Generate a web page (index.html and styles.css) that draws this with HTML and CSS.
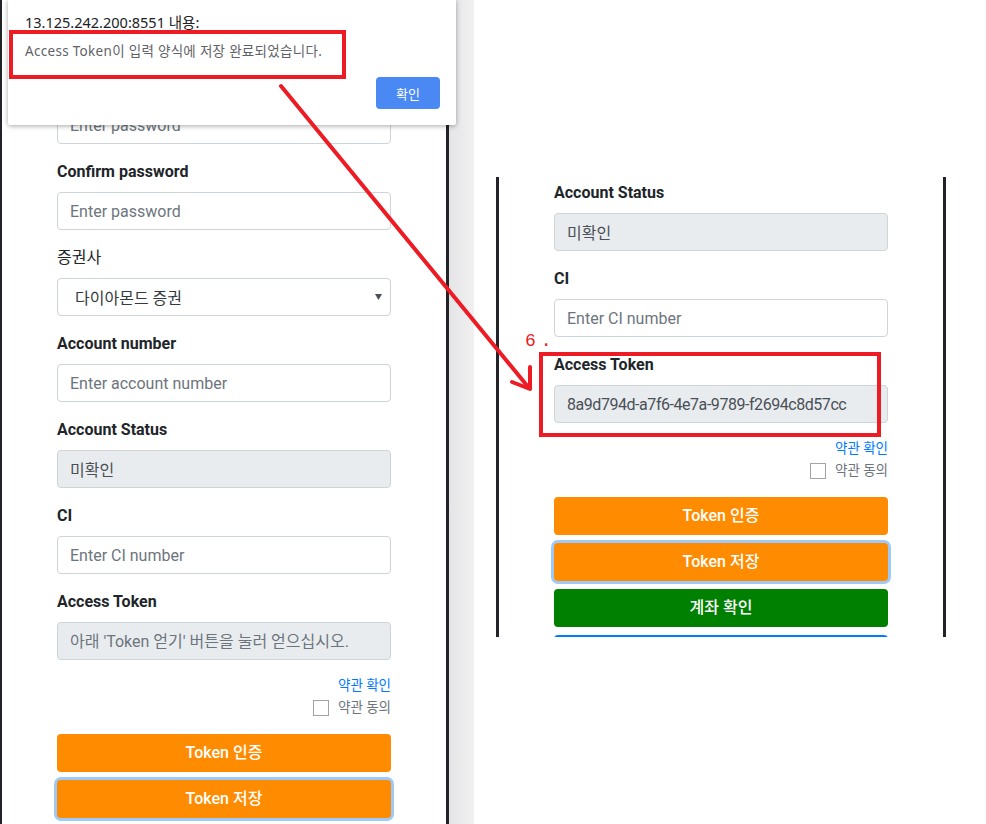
FILE: index.html
```html
<!DOCTYPE html>
<html lang="ko">
<head>
<meta charset="utf-8">
<title>Access Token</title>
<link rel="stylesheet" href="styles.css">
</head>
<body>
<div class="page">
  <section class="panel panel-left">
    <div class="group">
      <label class="label">Password</label>
      <input class="control" type="password" placeholder="Enter password">
    </div>
    <div class="group">
      <label class="label">Confirm password</label>
      <input class="control" type="password" placeholder="Enter password">
    </div>
    <div class="group">
      <label class="label label-plain">증권사</label>
      <div class="select"><span>다이아몬드 증권</span><svg class="caret" width="7" height="6" viewBox="0 0 7 6"><path d="M0 0H7L3.5 6Z" fill="#495057"/></svg></div>
    </div>
    <div class="group">
      <label class="label">Account number</label>
      <input class="control" type="text" placeholder="Enter account number">
    </div>
    <div class="group">
      <label class="label">Account Status</label>
      <input class="control" type="text" value="미확인" disabled>
    </div>
    <div class="group">
      <label class="label">CI</label>
      <input class="control" type="text" placeholder="Enter CI number">
    </div>
    <div class="group">
      <label class="label">Access Token</label>
      <input class="control" type="text" placeholder="아래 'Token 얻기' 버튼을 눌러 얻으십시오." disabled>
    </div>
    <div class="terms">
      <a href="#">약관 확인</a>
      <div class="agree"><input class="check" type="checkbox"><span>약관 동의</span></div>
    </div>
    <button class="btn btn-orange">Token 인증</button>
    <button class="btn btn-orange btn-focus">Token 저장</button>
  </section>

  <div class="gutter"></div>

  <section class="panel panel-right">
    <div class="group">
      <label class="label">Account Status</label>
      <input class="control" type="text" value="미확인" disabled>
    </div>
    <div class="group">
      <label class="label">CI</label>
      <input class="control" type="text" placeholder="Enter CI number">
    </div>
    <div class="group">
      <label class="label">Access Token</label>
      <input class="control control-token" type="text" value="8a9d794d-a7f6-4e7a-9789-f2694c8d57cc" disabled>
    </div>
    <div class="terms">
      <a href="#">약관 확인</a>
      <div class="agree"><input class="check" type="checkbox"><span>약관 동의</span></div>
    </div>
    <button class="btn btn-orange">Token 인증</button>
    <button class="btn btn-orange btn-focus">Token 저장</button>
    <button class="btn btn-green">계좌 확인</button>
    <button class="btn btn-blue" aria-label="다음"></button>
  </section>
</div>

<div class="dialog">
  <div class="dialog-title">13.125.242.200:8551 내용:</div>
  <div class="dialog-msg">Access Token이 입력 양식에 저장 완료되었습니다.</div>
  <button class="dialog-btn">확인</button>
  <div class="mark mark-dialog"></div>
</div>

<div class="mark mark-token"></div>
<div class="step">6.</div>

<svg class="arrow" width="986" height="824" viewBox="0 0 986 824">
  <g fill="none" stroke="#ed1c24" stroke-width="4" stroke-linecap="round" stroke-linejoin="round">
    <path d="M281 86 L529 388"/>
    <path d="M512 382 L530 389 L530 367"/>
  </g>
</svg>
</body>
</html>
```

FILE: styles.css
```css
* { box-sizing: border-box; }

html, body { margin: 0; padding: 0; }

body {
  width: 986px;
  height: 824px;
  overflow: hidden;
  position: relative;
  background: #fff;
  font-family: Roboto, "Noto Sans CJK KR", sans-serif;
  color: #212529;
}

.page {
  display: flex;
  align-items: flex-start;
  height: 824px;
}

.panel {
  background: #fff;
  overflow: hidden;
  flex: none;
}

.panel-left {
  width: 449px;
  height: 824px;
  border-left: 2px solid #212327;
  border-right: 3px solid #212327;
  padding: 74px 55px 0;
}

.gutter {
  flex: none;
  width: 25px;
  height: 824px;
  background: linear-gradient(to right, #e5e5e7, #f0f0f1);
}

.panel-right {
  margin-left: 22px;
  margin-top: 177px;
  width: 450px;
  height: 460px;
  border-left: 3px solid #212327;
  border-right: 3px solid #212327;
  padding: 4px 55px 0;
}

.group { margin-bottom: 16px; }

.label {
  display: block;
  font-size: 16px;
  line-height: 24px;
  font-weight: 700;
  color: #212529;
  margin-bottom: 8px;
}

.label-plain { font-weight: 400; }

.control {
  display: block;
  width: 100%;
  height: 38px;
  margin: 0;
  padding: 6px 12px;
  font-family: inherit;
  font-size: 16px;
  line-height: 24px;
  color: #495057;
  background: #fff;
  border: 1px solid #ced4da;
  border-radius: 4px;
  outline: none;
}

.control::placeholder { color: #6c757d; opacity: 1; }

.control:disabled {
  background: #e9ecef;
  color: #495057;
  -webkit-text-fill-color: #495057;
  opacity: 1;
}

.control:disabled::placeholder {
  color: #6c757d;
  -webkit-text-fill-color: #6c757d;
}

.control-token { letter-spacing: -0.45px; }

.select {
  display: flex;
  align-items: center;
  justify-content: space-between;
  height: 38px;
  padding: 0 8px 0 17px;
  border: 1px solid #ced4da;
  border-radius: 4px;
  background: #fff;
  font-size: 16px;
  color: #343a40;
}

.caret { display: block; }

.terms {
  display: flex;
  flex-direction: column;
  align-items: flex-end;
  margin-bottom: 18px;
  font-size: 13.5px;
}

.terms a {
  color: #007bff;
  line-height: 18px;
  text-decoration: none;
}

.agree {
  display: flex;
  align-items: center;
  gap: 9px;
  margin-top: 4px;
  height: 18px;
  line-height: 18px;
  color: #6c757d;
}

.check {
  appearance: none;
  -webkit-appearance: none;
  display: block;
  width: 16px;
  height: 16px;
  margin: 2px 0 0;
  border: 1px solid #a3a3a3;
  background: #fff;
}

.btn {
  display: block;
  width: 100%;
  height: 38px;
  margin: 0 0 8px;
  padding: 0;
  border: 0;
  border-radius: 4px;
  color: #fff;
  font-family: inherit;
  font-size: 16px;
  font-weight: 500;
  line-height: 38px;
}

.btn-orange { background: #ff8c00; }
.btn-green { background: #008000; }
.btn-blue { background: #007bff; }
.btn-focus { box-shadow: 0 0 0 3px #9dcaf8; }

.dialog {
  position: absolute;
  left: 8px;
  top: 0;
  width: 448px;
  height: 125px;
  background: #fff;
  box-shadow: 0 1px 5px rgba(0, 0, 0, 0.35);
  border-radius: 0 0 2px 2px;
  padding: 12px 16px 16px 17px;
  display: flex;
  flex-direction: column;
  font-family: "Noto Sans", "Noto Sans CJK KR", sans-serif;
}

.dialog-title {
  font-size: 14.5px;
  line-height: 20px;
  color: #202124;
}

.dialog-msg {
  margin-top: 10px;
  font-size: 13.5px;
  line-height: 18px;
  letter-spacing: 0.3px;
  color: #5f6368;
}

.dialog-btn {
  margin-top: auto;
  align-self: flex-end;
  width: 64px;
  height: 32px;
  border: 0;
  border-radius: 4px;
  background: #4a88f3;
  color: #fff;
  font-family: inherit;
  font-size: 13px;
  padding: 0;
}

.mark {
  position: absolute;
  border: 4px solid #ed1c24;
}

.mark-dialog {
  left: 1px;
  top: 30px;
  width: 337px;
  height: 49px;
}

.mark-token {
  left: 539px;
  top: 352px;
  width: 342px;
  height: 85px;
}

.step {
  position: absolute;
  left: 525px;
  top: 332px;
  font-family: "Liberation Mono", monospace;
  font-size: 18px;
  line-height: 18px;
  letter-spacing: 5px;
  color: #ed1c24;
}

.arrow {
  position: absolute;
  left: 0;
  top: 0;
  pointer-events: none;
}
```
